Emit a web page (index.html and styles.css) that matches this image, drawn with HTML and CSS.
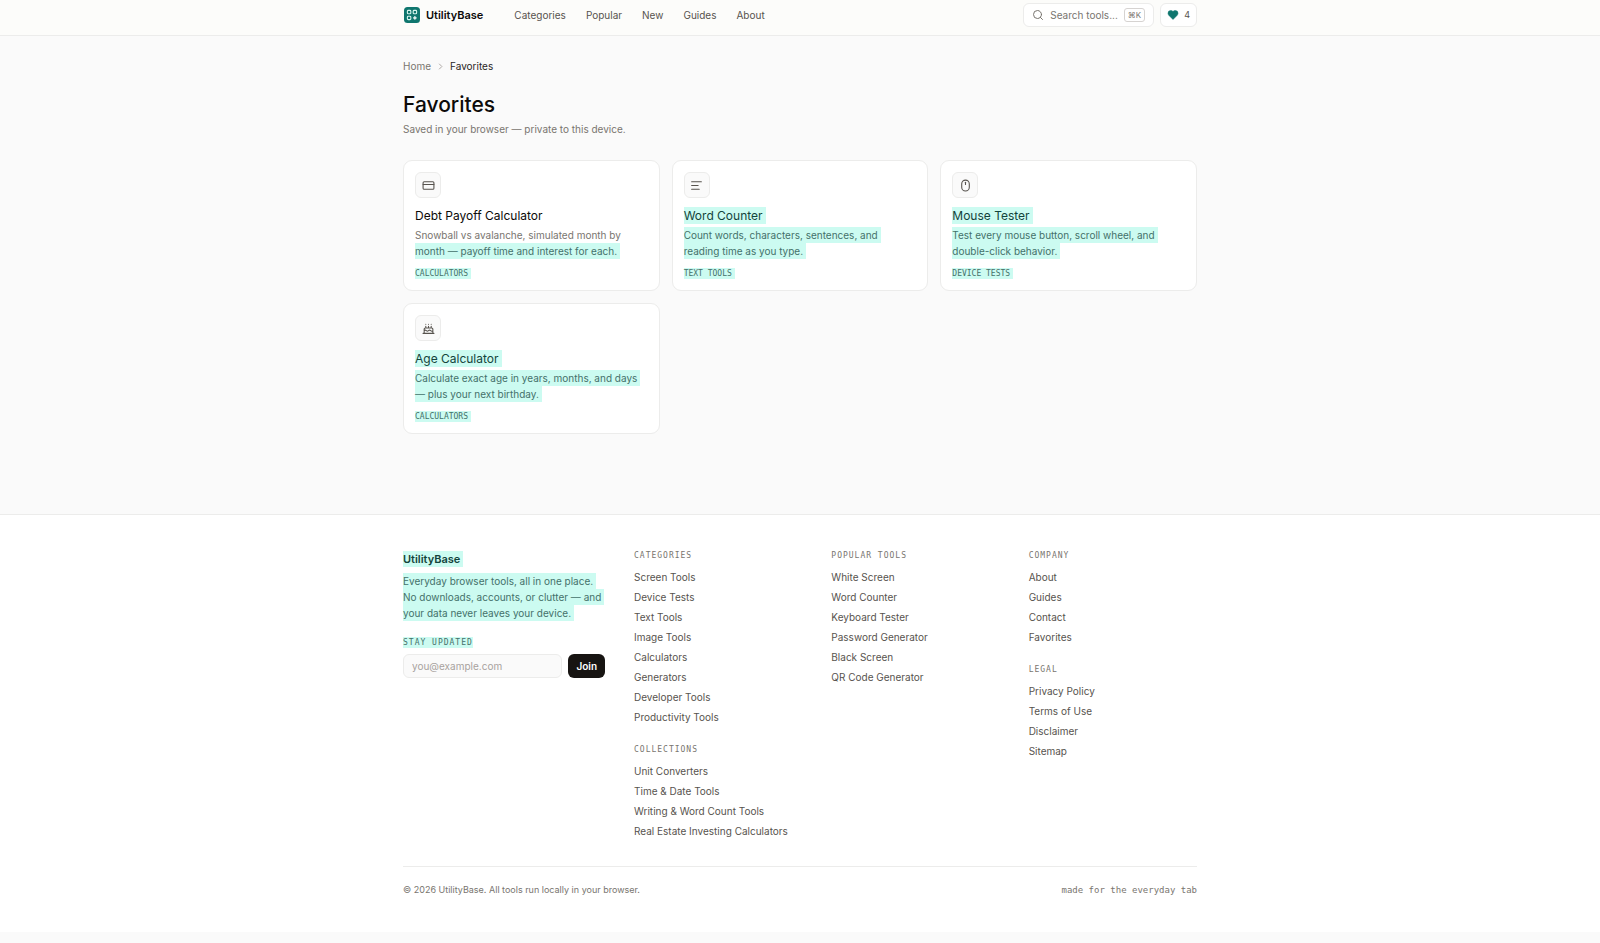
FILE: index.html
```html
<!DOCTYPE html>
<html lang="en">
<head>
<meta charset="utf-8">
<meta name="viewport" content="width=device-width, initial-scale=1">
<title>Favorites — UtilityBase</title>
<link rel="stylesheet" href="styles.css">
</head>
<body>
<header class="site-header">
  <div class="container header-row">
    <a class="brand" href="#">
      <svg class="brand-logo" viewBox="0 0 16 16" aria-hidden="true">
        <rect width="16" height="16" rx="3.5" fill="#0f766e"/>
        <g fill="none" stroke="#d5f5ee" stroke-width="1.1">
          <rect x="3.4" y="3.4" width="3.4" height="3.4" rx=".9"/>
          <rect x="9.2" y="3.4" width="3.4" height="3.4" rx=".9"/>
          <rect x="3.4" y="9.2" width="3.4" height="3.4" rx=".9"/>
        </g>
        <path d="M10.900 9.300l.5 1.100 1.100.5-1.100.5-.5 1.100-.5-1.100-1.100-.5 1.100-.5z" fill="#fff" stroke="#fff" stroke-width=".8"/>
      </svg>
      <span>UtilityBase</span>
    </a>
    <nav class="main-nav" aria-label="Main">
      <a href="#">Categories</a>
      <a href="#">Popular</a>
      <a href="#">New</a>
      <a href="#">Guides</a>
      <a href="#">About</a>
    </nav>
    <div class="header-tools">
      <button class="search-button" type="button">
        <svg class="search-icon" viewBox="0 0 24 24" aria-hidden="true"><circle cx="11" cy="11" r="8"/><path d="m21 21-4.3-4.3"/></svg>
        <span>Search tools...</span>
        <kbd>⌘K</kbd>
      </button>
      <a class="favorites-link" href="#" aria-label="4 favorites">
        <svg class="heart-icon" viewBox="0 0 24 24" aria-hidden="true"><path d="M19 14c1.49-1.46 3-3.21 3-5.5A5.5 5.5 0 0 0 16.500 3c-1.76 0-3 .5-4.500 2-1.500-1.500-2.740-2-4.500-2A5.500 5.500 0 0 0 2 8.500c0 2.300 1.500 4.050 3 5.500l7 7Z"/></svg>
        <span>4</span>
      </a>
    </div>
  </div>
</header>

<main class="container main">
  <nav class="breadcrumb" aria-label="Breadcrumb">
    <a href="#">Home</a>
    <svg class="chevron" viewBox="0 0 24 24" aria-hidden="true"><path d="m9 18 6-6-6-6"/></svg>
    <span aria-current="page">Favorites</span>
  </nav>
  <h1>Favorites</h1>
  <p class="subtitle">Saved in your browser — private to this device.</p>

  <div class="card-grid">
    <a class="card" href="#">
      <span class="card-icon"><svg viewBox="0 0 24 24" aria-hidden="true"><rect x="2" y="5" width="20" height="14" rx="2"/><path d="M2 10h20"/></svg></span>
      <h2>Debt Payoff Calculator</h2>
      <p>Snowball vs avalanche, simulated month by <span class="hl">month — payoff time and interest for each.</span></p>
      <span class="tag"><span class="hl">CALCULATORS</span></span>
    </a>
    <a class="card" href="#">
      <span class="card-icon"><svg viewBox="0 0 24 24" aria-hidden="true"><path d="M21 5H3M15 12H3M17 19H3"/></svg></span>
      <h2><span class="hl">Word Counter</span></h2>
      <p><span class="hl">Count words, characters, sentences, and reading time as you type.</span></p>
      <span class="tag"><span class="hl">TEXT TOOLS</span></span>
    </a>
    <a class="card" href="#">
      <span class="card-icon"><svg viewBox="0 0 24 24" aria-hidden="true"><rect x="5" y="2" width="14" height="20" rx="7"/><path d="M12 6v4"/></svg></span>
      <h2><span class="hl">Mouse Tester</span></h2>
      <p><span class="hl">Test every mouse button, scroll wheel, and double-click behavior.</span></p>
      <span class="tag"><span class="hl">DEVICE TESTS</span></span>
    </a>
    <a class="card" href="#">
      <span class="card-icon"><svg viewBox="0 0 24 24" aria-hidden="true"><path d="M20 21v-8a2 2 0 0 0-2-2H6a2 2 0 0 0-2 2v8M4 16s.5-1 2-1 2.500 2 4 2 2.500-2 4-2 2.500 2 4 2 2-1 2-1M2 21h20M7 8v3M12 8v3M17 8v3M7 4h.01M12 4h.01M17 4h.01"/></svg></span>
      <h2><span class="hl">Age Calculator</span></h2>
      <p><span class="hl">Calculate exact age in years, months, and days — plus your next birthday.</span></p>
      <span class="tag"><span class="hl">CALCULATORS</span></span>
    </a>
  </div>
</main>

<footer class="site-footer">
  <div class="container">
    <div class="footer-grid">
      <section class="about">
        <h2><span class="hl">UtilityBase</span></h2>
        <p><span class="hl">Everyday browser tools, all in one place. No downloads, accounts, or clutter — and your data never leaves your device.</span></p>
        <form class="signup">
          <label for="email"><span class="hl">STAY UPDATED</span></label>
          <div class="signup-row">
            <input id="email" type="email" placeholder="you@example.com">
            <button type="button">Join</button>
          </div>
        </form>
      </section>
      <div class="link-column">
        <section>
          <h3>CATEGORIES</h3>
          <ul>
            <li><a href="#">Screen Tools</a></li>
            <li><a href="#">Device Tests</a></li>
            <li><a href="#">Text Tools</a></li>
            <li><a href="#">Image Tools</a></li>
            <li><a href="#">Calculators</a></li>
            <li><a href="#">Generators</a></li>
            <li><a href="#">Developer Tools</a></li>
            <li><a href="#">Productivity Tools</a></li>
          </ul>
        </section>
        <section>
          <h3>COLLECTIONS</h3>
          <ul>
            <li><a href="#">Unit Converters</a></li>
            <li><a href="#">Time &amp; Date Tools</a></li>
            <li><a href="#">Writing &amp; Word Count Tools</a></li>
            <li><a href="#">Real Estate Investing Calculators</a></li>
          </ul>
        </section>
      </div>
      <div class="link-column">
        <section>
          <h3>POPULAR TOOLS</h3>
          <ul>
            <li><a href="#">White Screen</a></li>
            <li><a href="#">Word Counter</a></li>
            <li><a href="#">Keyboard Tester</a></li>
            <li><a href="#">Password Generator</a></li>
            <li><a href="#">Black Screen</a></li>
            <li><a href="#">QR Code Generator</a></li>
          </ul>
        </section>
      </div>
      <div class="link-column">
        <section>
          <h3>COMPANY</h3>
          <ul>
            <li><a href="#">About</a></li>
            <li><a href="#">Guides</a></li>
            <li><a href="#">Contact</a></li>
            <li><a href="#">Favorites</a></li>
          </ul>
        </section>
        <section>
          <h3>LEGAL</h3>
          <ul>
            <li><a href="#">Privacy Policy</a></li>
            <li><a href="#">Terms of Use</a></li>
            <li><a href="#">Disclaimer</a></li>
            <li><a href="#">Sitemap</a></li>
          </ul>
        </section>
      </div>
    </div>
    <div class="footer-bottom">
      <p>© 2026 UtilityBase. All tools run locally in your browser.</p>
      <p class="motto">made for the everyday tab</p>
    </div>
  </div>
</footer>
</body>
</html>
```
FILE: styles.css
```css
:root {
  --bg: #fafafa;
  --line: #ececeb;
  --ink: #0c0a09;
  --text: #57534e;
  --muted: #79756f;
  --teal: #0f766e;
  --highlight: #ccfbf1;
  --mono: "DejaVu Sans Mono", "Liberation Mono", monospace;
}

* {
  box-sizing: border-box;
}

body {
  margin: 0;
  background: var(--bg);
  color: var(--ink);
  font: 10px/16px Inter, "Liberation Sans", sans-serif;
}

h1, h2, h3, p, ul {
  margin: 0;
  padding: 0;
}

ul {
  list-style: none;
}

a {
  color: inherit;
  text-decoration: none;
}

button, input {
  font: inherit;
}

.container {
  max-width: 794px;
  margin: 0 auto;
}

/* Header */
.site-header {
  background: #fcfcfa;
  border-bottom: 1px solid var(--line);
}

.header-row {
  display: flex;
  align-items: center;
  padding: 3px 0 8px;
}

.brand {
  display: flex;
  align-items: center;
  gap: 6px;
  padding-left: 1px;
  font-size: 11px;
  font-weight: 600;
}

.brand-logo {
  width: 16px;
  height: 16px;
}

.main-nav {
  display: flex;
  gap: 20px;
  margin-left: 31px;
  color: var(--text);
}

.header-tools {
  display: flex;
  gap: 6px;
  margin-left: auto;
}

.search-button,
.favorites-link {
  display: flex;
  align-items: center;
  height: 24px;
  border: 1px solid var(--line);
  border-radius: 6px;
  background: #fff;
  color: var(--muted);
}

.search-button {
  gap: 6px;
  padding: 0 8px;
}

.search-icon {
  width: 12px;
  height: 12px;
  fill: none;
  stroke: currentColor;
  stroke-width: 2;
  stroke-linecap: round;
}

kbd {
  padding: 0 3px;
  border: 1px solid #d6d3d1;
  border-radius: 3px;
  font: 8px/12px Inter, "DejaVu Sans Mono", monospace;
}

.favorites-link {
  gap: 5px;
  padding: 0 6px;
  color: var(--text);
  font-size: 9px;
}

.heart-icon {
  width: 12px;
  height: 12px;
  fill: var(--teal);
  stroke: var(--teal);
  stroke-width: 1;
}

/* Main */
.main {
  padding: 22px 0 80px;
}

.breadcrumb {
  display: flex;
  align-items: center;
  gap: 4px;
  color: var(--muted);
}

.breadcrumb [aria-current] {
  color: #292524;
}

.chevron {
  width: 11px;
  height: 11px;
  fill: none;
  stroke: #a8a29e;
  stroke-width: 2;
}

h1 {
  margin-top: 17px;
  font-size: 21px;
  line-height: 28px;
  font-weight: 500;
}

.subtitle {
  margin-top: 2px;
  color: var(--muted);
}

.card-grid {
  display: grid;
  grid-template-columns: repeat(3, minmax(0, 1fr));
  gap: 12px;
  margin-top: 23px;
}

.card {
  padding: 11px;
  border: 1px solid var(--line);
  border-radius: 9px;
  background: #fff;
}

.card-icon {
  display: grid;
  place-items: center;
  width: 26px;
  height: 26px;
  border: 1px solid var(--line);
  border-radius: 6px;
  background: var(--bg);
}

.card-icon svg {
  width: 13px;
  height: 13px;
  fill: none;
  stroke: #57534e;
  stroke-width: 2;
  stroke-linecap: round;
  stroke-linejoin: round;
}

.card h2 {
  margin-top: 9px;
  font-size: 12px;
  line-height: 18px;
  font-weight: 400;
}

.card p {
  margin-top: 2px;
  padding-right: 4px;
  color: var(--muted);
}

.tag {
  display: block;
  margin-top: 9px;
  color: var(--muted);
  font: 8px/11px var(--mono);
}

.hl {
  padding: 2px 3px 2px 0;
  background: var(--highlight);
  color: #44716a;
  -webkit-box-decoration-break: clone;
  box-decoration-break: clone;
}

h2 .hl {
  padding-top: 1px;
  padding-bottom: 1px;
  color: #13443c;
}

.tag .hl {
  padding-top: 1px;
  padding-bottom: 1px;
}

label .hl {
  padding: 1px 0;
}

/* Footer */
.site-footer {
  border-top: 1px solid var(--line);
  background: #fff;
}

.footer-grid {
  display: grid;
  grid-template-columns: minmax(0, 6fr) repeat(3, minmax(0, 5fr));
  gap: 29px;
  padding: 35px 0 27px;
}

.about h2 {
  font-size: 11px;
  line-height: 18px;
  font-weight: 600;
}

.about p {
  margin-top: 5px;
}

.signup {
  margin-top: 16px;
}

.signup label {
  display: block;
  font: 8px/12px var(--mono);
  letter-spacing: 1px;
}

.signup-row {
  display: flex;
  gap: 6px;
  margin-top: 5px;
}

.signup input {
  flex: 1;
  min-width: 0;
  height: 24px;
  padding: 0 8px;
  border: 1px solid var(--line);
  border-radius: 6px;
  background: var(--bg);
}

.signup input::placeholder {
  color: #a8a29e;
}

.signup button {
  height: 24px;
  padding: 0 8px;
  border: 0;
  border-radius: 6px;
  background: #171412;
  color: #fff;
  font-weight: 600;
}

.link-column {
  display: grid;
  align-content: start;
  gap: 19px;
}

.link-column h3 {
  color: var(--muted);
  font: 8px/12px var(--mono);
  letter-spacing: 1px;
}

.link-column ul {
  display: grid;
  gap: 4px;
  margin-top: 7px;
  color: var(--text);
  white-space: nowrap;
}

.footer-bottom {
  display: flex;
  justify-content: space-between;
  padding: 15px 0 34px;
  border-top: 1px solid var(--line);
  color: var(--muted);
  font-size: 9px;
}

.motto {
  font-family: var(--mono);
}
```
